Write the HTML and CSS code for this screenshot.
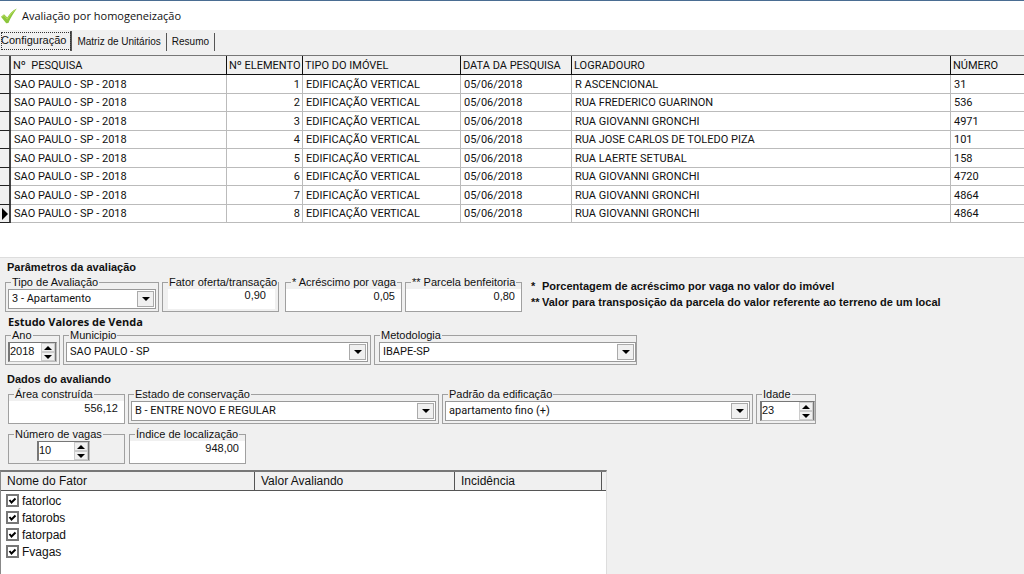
FILE: index.html
```html
<!DOCTYPE html>
<html lang="pt-BR">
<head>
<meta charset="utf-8">
<title>Avaliação por homogeneização</title>
<link rel="stylesheet" href="styles.css">
</head>
<body>
<header class="titlebar">
  <svg class="logo" viewBox="0 0 16 16" aria-hidden="true"><path d="M0 8.8 3 6.2 6.300 9.600C8.400 5.800 11.200 2.700 15.800 0.400 12.400 5 9.800 9.400 7.400 15L5.200 15.300Z" fill="#8cc63c"/><path d="M1.200 8.800 3 7.400 6.300 11.200C8.400 7.400 11 4.500 13.600 2.400" fill="none" stroke="#b9dc5a" stroke-width="1"/></svg>
  <h1>Avaliação por homogeneização</h1>
</header>

<nav class="tabs" role="tablist">
  <button class="tab active" type="button" role="tab" aria-selected="true">Configuração</button>
  <button class="tab" type="button" role="tab" aria-selected="false">Matriz de Unitários</button>
  <button class="tab" type="button" role="tab" aria-selected="false">Resumo</button>
</nav>

<main>
  <div class="grid-area">
    <table class="records">
      <colgroup><col class="c-mark"><col class="c-search"><col class="c-item"><col class="c-type"><col class="c-date"><col class="c-street"><col></colgroup>
      <thead><tr><th></th><th>Nº&nbsp; PESQUISA</th><th>Nº ELEMENTO</th><th>TIPO DO IMÓVEL</th><th>DATA DA PESQUISA</th><th>LOGRADOURO</th><th>NÚMERO</th></tr></thead>
      <tbody>
        <tr><th></th><td>SAO PAULO - SP - 2018</td><td class="num">1</td><td>EDIFICAÇÃO VERTICAL</td><td>05/06/2018</td><td>R ASCENCIONAL</td><td>31</td></tr>
        <tr><th></th><td>SAO PAULO - SP - 2018</td><td class="num">2</td><td>EDIFICAÇÃO VERTICAL</td><td>05/06/2018</td><td>RUA FREDERICO GUARINON</td><td>536</td></tr>
        <tr><th></th><td>SAO PAULO - SP - 2018</td><td class="num">3</td><td>EDIFICAÇÃO VERTICAL</td><td>05/06/2018</td><td>RUA GIOVANNI GRONCHI</td><td>4971</td></tr>
        <tr><th></th><td>SAO PAULO - SP - 2018</td><td class="num">4</td><td>EDIFICAÇÃO VERTICAL</td><td>05/06/2018</td><td>RUA JOSE CARLOS DE TOLEDO PIZA</td><td>101</td></tr>
        <tr><th></th><td>SAO PAULO - SP - 2018</td><td class="num">5</td><td>EDIFICAÇÃO VERTICAL</td><td>05/06/2018</td><td>RUA LAERTE SETUBAL</td><td>158</td></tr>
        <tr><th></th><td>SAO PAULO - SP - 2018</td><td class="num">6</td><td>EDIFICAÇÃO VERTICAL</td><td>05/06/2018</td><td>RUA GIOVANNI GRONCHI</td><td>4720</td></tr>
        <tr><th></th><td>SAO PAULO - SP - 2018</td><td class="num">7</td><td>EDIFICAÇÃO VERTICAL</td><td>05/06/2018</td><td>RUA GIOVANNI GRONCHI</td><td>4864</td></tr>
        <tr><th><svg class="marker" viewBox="0 0 6 12" aria-hidden="true"><path d="M0 0 6 6 0 12Z"/></svg></th><td>SAO PAULO - SP - 2018</td><td class="num">8</td><td>EDIFICAÇÃO VERTICAL</td><td>05/06/2018</td><td>RUA GIOVANNI GRONCHI</td><td>4864</td></tr>
      </tbody>
    </table>
  </div>

  <form class="panel">
    <h2>Parâmetros da avaliação</h2>
    <div class="row">
      <fieldset class="group w-type">
        <legend><label for="tipo">Tipo de Avaliação</label></legend>
        <div class="combo"><select id="tipo"><option>3 - Apartamento</option></select><span class="arrow"><svg viewBox="0 0 8 4"><path d="M0 0H8L4 4Z"/></svg></span></div>
      </fieldset>
      <fieldset class="group w-value inset">
        <legend><label for="fator">Fator oferta/transação</label></legend>
        <input class="value" id="fator" type="text" value="0,90">
      </fieldset>
      <fieldset class="group w-value spaced">
        <legend><label for="acrescimo">* Acréscimo por vaga</label></legend>
        <input class="value" id="acrescimo" type="text" value="0,05">
      </fieldset>
      <fieldset class="group w-value">
        <legend><label for="parcela">** Parcela benfeitoria</label></legend>
        <input class="value" id="parcela" type="text" value="0,80">
      </fieldset>
      <div class="notes">
        <span>*</span><span>Porcentagem de acréscimo por vaga no valor do imóvel</span>
        <span>**</span><span>Valor para transposição da parcela do valor referente ao terreno de um local</span>
      </div>
    </div>

    <h2 class="humanist">Estudo Valores de Venda</h2>
    <div class="row sales">
      <fieldset class="group w-year">
        <legend><label for="ano">Ano</label></legend>
        <div class="spin"><input id="ano" type="text" value="2018"><span class="steps"><button type="button" aria-label="Aumentar ano"><svg viewBox="0 0 8 4"><path d="M0 4H8L4 0Z"/></svg></button><button type="button" aria-label="Diminuir ano"><svg viewBox="0 0 8 4"><path d="M0 0H8L4 4Z"/></svg></button></span></div>
      </fieldset>
      <fieldset class="group w-city">
        <legend><label for="municipio">Municipio</label></legend>
        <div class="combo"><select id="municipio"><option>SAO PAULO - SP</option></select><span class="arrow"><svg viewBox="0 0 8 4"><path d="M0 0H8L4 4Z"/></svg></span></div>
      </fieldset>
      <fieldset class="group w-method">
        <legend><label for="metodologia">Metodologia</label></legend>
        <div class="combo"><select id="metodologia"><option>IBAPE-SP</option></select><span class="arrow"><svg viewBox="0 0 8 4"><path d="M0 0H8L4 4Z"/></svg></span></div>
      </fieldset>
    </div>

    <h2>Dados do avaliando</h2>
    <div class="row indented">
      <fieldset class="group w-value">
        <legend><label for="area">Área construída</label></legend>
        <input class="value" id="area" type="text" value="556,12">
      </fieldset>
      <fieldset class="group w-wide">
        <legend><label for="estado">Estado de conservação</label></legend>
        <div class="combo"><select id="estado"><option>B - ENTRE NOVO E REGULAR</option></select><span class="arrow"><svg viewBox="0 0 8 4"><path d="M0 0H8L4 4Z"/></svg></span></div>
      </fieldset>
      <fieldset class="group w-wide">
        <legend><label for="padrao">Padrão da edificação</label></legend>
        <div class="combo"><select id="padrao"><option>apartamento fino (+)</option></select><span class="arrow"><svg viewBox="0 0 8 4"><path d="M0 0H8L4 4Z"/></svg></span></div>
      </fieldset>
      <fieldset class="group w-age">
        <legend><label for="idade">Idade</label></legend>
        <div class="spin"><input id="idade" type="text" value="23"><span class="steps"><button type="button" aria-label="Aumentar idade"><svg viewBox="0 0 8 4"><path d="M0 4H8L4 0Z"/></svg></button><button type="button" aria-label="Diminuir idade"><svg viewBox="0 0 8 4"><path d="M0 0H8L4 4Z"/></svg></button></span></div>
      </fieldset>
    </div>
    <div class="row indented second">
      <fieldset class="group w-value centered">
        <legend><label for="vagas">Número de vagas</label></legend>
        <div class="spin"><input id="vagas" type="text" value="10"><span class="steps"><button type="button" aria-label="Aumentar vagas"><svg viewBox="0 0 8 4"><path d="M0 4H8L4 0Z"/></svg></button><button type="button" aria-label="Diminuir vagas"><svg viewBox="0 0 8 4"><path d="M0 0H8L4 4Z"/></svg></button></span></div>
      </fieldset>
      <fieldset class="group w-value">
        <legend><label for="indice">Índice de localização</label></legend>
        <input class="value" id="indice" type="text" value="948,00">
      </fieldset>
    </div>

    <section class="factors">
      <div class="factors-head"><span>Nome do Fator</span><span>Valor Avaliando</span><span>Incidência</span><span></span></div>
      <div class="factors-body">
        <label><input type="checkbox" checked><svg viewBox="0 0 13 13" aria-hidden="true"><path d="M3.500 6 5.500 8.500 9.500 4.500"/></svg>fatorloc</label>
        <label><input type="checkbox" checked><svg viewBox="0 0 13 13" aria-hidden="true"><path d="M3.500 6 5.500 8.500 9.500 4.500"/></svg>fatorobs</label>
        <label><input type="checkbox" checked><svg viewBox="0 0 13 13" aria-hidden="true"><path d="M3.500 6 5.500 8.500 9.500 4.500"/></svg>fatorpad</label>
        <label><input type="checkbox" checked><svg viewBox="0 0 13 13" aria-hidden="true"><path d="M3.500 6 5.500 8.500 9.500 4.500"/></svg>Fvagas</label>
      </div>
    </section>
  </form>
</main>
</body>
</html>
```
FILE: styles.css
```css
* { box-sizing: border-box; }

body {
  margin: 0;
  min-height: 100vh;
  display: flex;
  flex-direction: column;
  background: #fff;
  color: #111;
  font: 11px/14px "Liberation Sans", Arial, sans-serif;
  overflow: hidden;
}

input, select, button { font: inherit; color: inherit; }

.titlebar {
  display: flex;
  align-items: center;
  gap: 5px;
  height: 30px;
  padding-left: 1px;
  border-top: 1px solid #4a6d92;
}
.titlebar h1 { margin: 0; font: 11px/16px "Open Sans", "Noto Sans", sans-serif; }
.logo { width: 16px; height: 16px; }

.tabs {
  display: flex;
  align-items: flex-end;
  height: 25px;
  padding-bottom: 4px;
  background: #f0f0f0;
}
.tab {
  height: 18px;
  padding: 0 3px 0 4px;
  border: 0;
  border-right: 1px solid #555;
  background: transparent;
  white-space: nowrap;
}
.tab + .tab { font-size: 10px; padding: 0 5px; }
.tab.active {
  height: 20px;
  padding: 0 4px 3px 1px;
  outline: 1px dotted #333;
  outline-offset: -2px;
  border-right-width: 2px;
}

main { flex: 1; display: flex; flex-direction: column; }

.grid-area { min-height: 202px; border-top: 1px solid #777; }

.records { width: 100%; table-layout: fixed; border-collapse: separate; border-spacing: 0; font-family: Roboto, "Liberation Sans", sans-serif; }
.records th, .records td { padding: 0 2px; text-align: left; font-weight: normal; white-space: nowrap; line-height: 17px; }
.records tr { height: 18px; }
.records tbody tr:nth-child(odd) { height: 19px; }
.records thead tr { height: 19px; }
.records thead th { background: #f0f0f0; border-bottom: 1px solid #111; border-right: 1px solid #111; }
.records tbody th { background: #f0f0f0; border-bottom: 1px solid #222; border-right: 2px solid #444; padding: 0 0 0 2px; }
.records thead th:first-child { border-right: 2px solid #444; }
.records td { border-right: 1px solid #bbb; border-bottom: 1px solid #bbb; padding-left: 3px; }
.records td:last-child, .records thead th:last-child { border-right: 0; }
.records .num { text-align: right; }
.c-mark { width: 11px; }
.c-search { width: 216px; }
.c-item { width: 76px; }
.c-type { width: 158px; }
.c-date { width: 111px; }
.c-street { width: 379px; }
.marker { display: block; width: 6px; height: 12px; }

.panel { flex: 1; display: flex; flex-direction: column; background: #f0f0f0; border-top: 1px solid #ddd; padding-top: 2px; }
.panel h2 { margin: 0 0 1px; padding-left: 7px; font-size: 11px; line-height: 14px; }
.panel h2.humanist { margin: 0; padding-left: 8px; font-family: "Open Sans", "Noto Sans", sans-serif; line-height: 13px; }

.row { display: flex; gap: 3px; padding-left: 5px; margin-bottom: 3px; }
.row.sales { margin-bottom: 7px; }
.row.indented { padding-left: 8px; }
.row.second { gap: 4px; margin-bottom: 6px; }

.group { display: flex; flex-direction: column; height: 37px; min-width: 0; margin: 0; padding: 0 0 2px; border: 1px solid #a0a0a0; }
.group legend { margin-left: 5px; padding: 0 1px; line-height: 14px; white-space: nowrap; }
.w-type { width: 154px; }
.w-value { width: 117px; padding: 0; }
.w-value.inset { padding-bottom: 2px; }
.w-value.inset .value { width: auto; margin: 0 3px 0 5px; padding-right: 9px; }
.w-value.spaced { margin-left: 3px; }
.w-year { width: 55px; }
.w-city { width: 308px; }
.w-method { width: 263px; }
.w-wide { width: 311px; }
.w-age { width: 60px; padding: 0 0 1px; }

.value { display: block; width: 100%; height: 22px; border: 0; padding: 0 6px 8px; background: #fff; text-align: right; }

.combo { display: flex; height: 21px; margin: 0 2px; padding: 1px; background: #fff; border: 1px solid #999; }
.combo select { flex: 1; min-width: 0; appearance: none; border: 0; padding: 0 2px; background: #fff; font-family: Roboto, "Liberation Sans", sans-serif; }
.w-method .combo { margin: 0 0 0 4px; }
.arrow { display: flex; align-items: center; justify-content: center; width: 17px; border: 1px solid #aaa; background: #f0f0f0; pointer-events: none; }
.arrow svg { width: 8px; height: 4px; }

.spin { display: flex; height: 20px; margin: 0 2px; border: 1px solid #bbb; border-top-color: #777; border-left: 2px solid #777; background: #fff; }
.spin input { flex: 1; min-width: 0; border: 0; padding: 0 0 2px; background: #fff; }
.w-age .spin { margin: 0 0 0 3px; }
.centered .spin { width: 53px; margin-left: 28px; }
.steps { display: flex; flex-direction: column; width: 15px; border-right: 1px solid #777; background: #f0f0f0; }
.steps button { flex: 1; display: flex; align-items: center; justify-content: center; padding: 0; border: 1px solid #ccc; background: #f0f0f0; }
.steps svg { width: 8px; height: 4px; }

.notes { display: grid; grid-template-columns: 11px auto; align-content: start; margin: 3px 0 0 6px; font-weight: bold; line-height: 16px; white-space: nowrap; }

.factors { flex: 1; display: flex; flex-direction: column; width: 607px; border: 1px solid #888; border-top: 2px solid #777; border-right-color: #ddd; border-bottom: 0; background: #fff; font-size: 12px; }
.factors-head { display: grid; grid-template-columns: 254px 200px 147px auto; height: 19px; background: #f0f0f0; border-bottom: 1px solid #555; line-height: 19px; }
.factors-head span { padding-left: 6px; border-right: 1px solid #555; }
.factors-head span:last-child { border-right: 0; }
.factors-body { display: flex; flex-direction: column; padding: 1px 0 0 5px; }
.factors-body label { display: grid; grid-template-columns: 13px auto; column-gap: 3px; align-items: center; justify-content: start; height: 17px; }
.factors-body input, .factors-body svg { grid-area: 1 / 1; margin: 0; width: 13px; height: 13px; }
.factors-body input { appearance: none; border: 2px solid #777; background: #fff; }
.factors-body svg { fill: none; stroke: #000; stroke-width: 2; pointer-events: none; visibility: hidden; }
.factors-body input:checked + svg { visibility: visible; }
```
